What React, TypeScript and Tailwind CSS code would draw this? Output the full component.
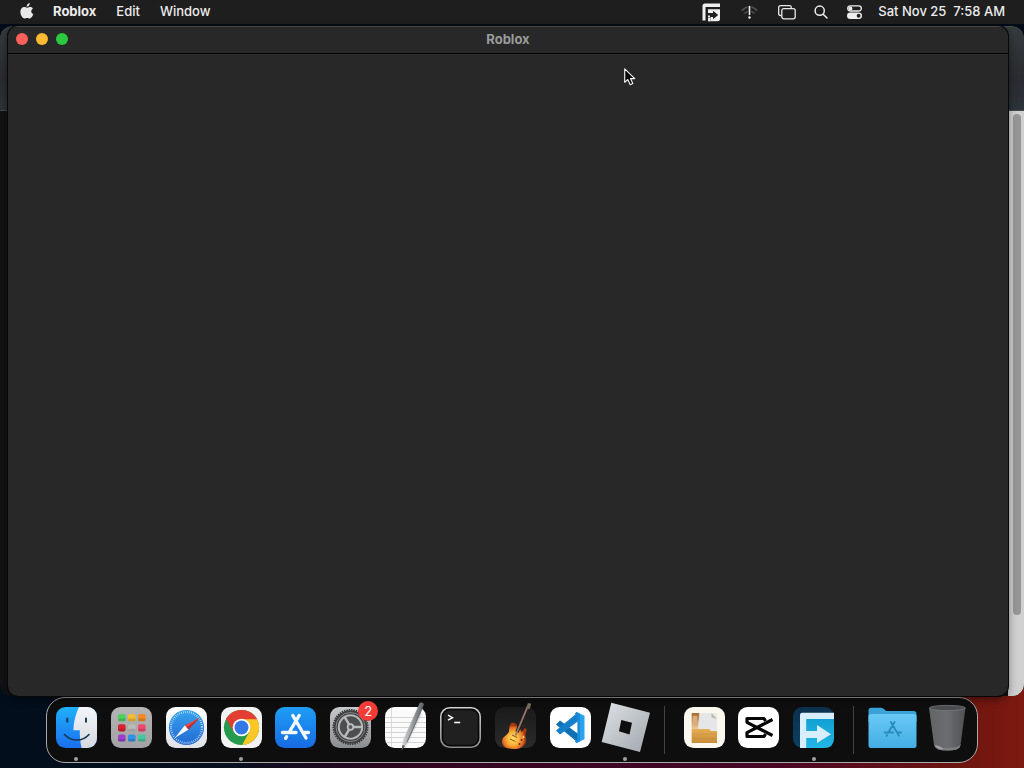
import type { ReactNode } from "react";

function Art({ children }: { children: ReactNode }) {
  return (
    <svg viewBox="0 0 41 41" className="h-[41px] w-[41px] overflow-visible" aria-hidden="true">
      {children}
    </svg>
  );
}

function Grad({ id, from, to, diagonal }: { id: string; from: string; to: string; diagonal?: boolean }) {
  return (
    <linearGradient id={id} x1="0" y1="0" x2={diagonal ? "1" : "0"} y2="1">
      <stop offset="0" stopColor={from} />
      <stop offset="1" stopColor={to} />
    </linearGradient>
  );
}

function Finder() {
  return (
    <Art>
      <defs>
        <Grad id="finderBlue" from="#1fb0f8" to="#1a6ff0" />
        <Grad id="finderWhite" from="#f4f5f8" to="#d5d9e0" />
        <clipPath id="finderClip"><rect width="41" height="41" rx="9.5" /></clipPath>
      </defs>
      <g clipPath="url(#finderClip)">
        <rect width="41" height="41" fill="url(#finderBlue)" />
        <path d="M23 0C19.500 7 17.600 15 17.300 23.300H23.800C23.600 29 24.100 35 25.600 41H41V0Z" fill="url(#finderWhite)" />
      </g>
      <path d="M11.300 11.500v3.200M30 11.500v3.200" stroke="#1b3a58" strokeWidth="2" strokeLinecap="round" />
      <path d="M8.500 27.500C15 34.800 26.500 34.800 33 27.500" stroke="#173653" strokeWidth="1.600" fill="none" strokeLinecap="round" />
    </Art>
  );
}

const launchColors = ["#4bd15c", "#f5bd2f", "#f58a1f", "#d8232f", "#b9bcb8", "#f0486f", "#9a3fd0", "#2f93e6", "#45c8a0"];

function Launchpad() {
  return (
    <Art>
      <defs><Grad id="launch" from="#b4b4b4" to="#a2a2a4" /></defs>
      <rect width="41" height="41" rx="9.500" fill="url(#launch)" />
      {launchColors.map((c, i) => (
        <g key={c}>
          <rect x={7 + (i % 3) * 10} y={7 + Math.floor(i / 3) * 10.200} width="7.600" height="7.200" rx="1.800" fill={c} />
          <rect x={7 + (i % 3) * 10} y={11.500 + Math.floor(i / 3) * 10.200} width="7.600" height="2.700" rx="1.300" fill="#000" opacity=".14" />
        </g>
      ))}
    </Art>
  );
}

function Safari() {
  return (
    <Art>
      <defs>
        <Grad id="safariBg" from="#ffffff" to="#dfe1e6" />
        <Grad id="safariBlue" from="#35a4ee" to="#2569d2" />
      </defs>
      <rect width="41" height="41" rx="9.500" fill="url(#safariBg)" />
      <circle cx="20.500" cy="20.500" r="17.600" fill="url(#safariBlue)" />
      <circle cx="20.500" cy="20.500" r="15.500" fill="none" stroke="#d6ebfc" strokeWidth="2.200" strokeDasharray=".65 1.380" />
      <path d="M33.800 10.500 18.700 18.600 22.600 22.600Z" fill="#f0443c" />
      <path d="M8.800 31 18.700 18.600 22.600 22.600Z" fill="#f6f8fb" />
      <path d="M33.800 10.500 20.600 20.600 22.600 22.600Z" fill="#b52d35" />
    </Art>
  );
}

function Chrome() {
  return (
    <Art>
      <defs><clipPath id="chromeClip"><circle cx="20.500" cy="20.500" r="17.600" /></clipPath></defs>
      <rect width="41" height="41" rx="9.500" fill="#f3f3f3" />
      <g clipPath="url(#chromeClip)">
        <rect x="2" y="2" width="37" height="37" fill="#269b4e" />
        <path d="M20.500 12H41V41H19.500L28.200 25Z" fill="#fbc726" />
        <path d="M0 0H41V12.200H20.500L12.700 24.900 3.500 9Z" fill="#e43d32" />
      </g>
      <circle cx="20.500" cy="20.500" r="8.800" fill="#fff" />
      <circle cx="20.500" cy="20.500" r="7" fill="#3478e6" />
    </Art>
  );
}

function Store() {
  return (
    <Art>
      <defs><Grad id="store" from="#1e9df5" to="#176be2" /></defs>
      <rect width="41" height="41" rx="9.500" fill="url(#store)" />
      <g stroke="#f1f8ff" strokeWidth="3.400" strokeLinecap="round" fill="none">
        <path d="M24.200 8.500 14 25.500M17.800 8.500 31 31M7.500 25.500H21M29 25.500H33.500M11.500 29.800 10.600 31.300" />
      </g>
    </Art>
  );
}

function Gear() {
  return (
    <Art>
      <defs><Grad id="gear" from="#c8c9cb" to="#8b8c8f" /></defs>
      <rect width="41" height="41" rx="9.500" fill="url(#gear)" />
      <circle cx="20.500" cy="20" r="16.800" fill="#3f4042" />
      <circle cx="20.500" cy="20" r="17.300" fill="none" stroke="#343537" strokeWidth="1.500" strokeDasharray="1.400 1" />
      <circle cx="20.500" cy="20" r="14.500" fill="none" stroke="#85878a" strokeWidth="1" />
      <circle cx="20.500" cy="20" r="11.700" fill="#4c4e50" stroke="#b5b7b9" strokeWidth="2" />
      <path d="M22.500 20H32M19.500 18.200 14.600 9.800M19.500 21.800 14.600 30.200" stroke="#b9bbbd" strokeWidth="2.400" />
      <circle cx="20.500" cy="20" r="2.800" fill="#56585a" stroke="#bbbdc0" strokeWidth="1.800" />
    </Art>
  );
}

function TextEdit() {
  return (
    <Art>
      <defs>
        <linearGradient id="pen" x1="0" y1="0" x2="1" y2=".3">
          <stop offset=".2" stopColor="#e1e3e4" /><stop offset=".55" stopColor="#a0a4a7" /><stop offset=".85" stopColor="#64696c" />
        </linearGradient>
      </defs>
      <rect width="41" height="41" rx="9.500" fill="#fbfbfb" />
      <path d="M0 10.500H41M0 15.500H41M0 20.500H41M0 25.500H41M0 30.500H41M1.500 35.500H39.500" stroke="#c9cacb" strokeWidth=".8" />
      <path d="M6.500 1V40" stroke="#cdced0" strokeWidth=".7" />
      <path d="M19 41 36 6" stroke="#000" strokeWidth="3" opacity=".1" />
      <path d="M34.500-3.500C35.500-5.500 39.500-4.300 38.800-2.200L23 34.500 16.700 43 18 33Z" fill="url(#pen)" />
      <path d="M17.500 38 20 39 16.700 43Z" fill="#4b4e50" />
      <path d="M37.500 1 22 35" stroke="#64686b" strokeWidth=".8" />
    </Art>
  );
}

function Terminal() {
  return (
    <Art>
      <defs><Grad id="termEdge" from="#d2d2d2" to="#8a8a8a" /></defs>
      <rect x=".8" y=".8" width="39.400" height="39.400" rx="9" fill="#080808" stroke="url(#termEdge)" strokeWidth="1.600" />
      <rect x="3.300" y="3.300" width="34.400" height="34.400" rx="6.500" fill="#202021" />
      <path d="M8 8.200 12.500 10.700 8 13.200M14.200 15.500H20.200" fill="none" stroke="#fff" strokeWidth="1.400" />
    </Art>
  );
}

function Guitar() {
  return (
    <Art>
      <defs>
        <Grad id="garage" from="#1a1a1a" to="#2b2b2c" />
        <radialGradient id="burst" cx=".45" cy=".6">
          <stop offset="0" stopColor="#ffe36a" /><stop offset=".5" stopColor="#f9ae37" /><stop offset=".85" stopColor="#e06c24" /><stop offset="1" stopColor="#a53a12" />
        </radialGradient>
      </defs>
      <rect width="41" height="41" rx="9.500" fill="url(#garage)" />
      <path d="M16.500 16C19.500 15 22 17 22.500 20 23.500 22.500 26 23 28 21.500 30.500 20 32.300 22 31.200 24.500 29.500 28 31.500 31 31 34.500 30 39.500 24.500 42.500 18.500 42 11.500 42 7 39.500 7 34.500 7 29.500 13 28 14 24.500 14.500 21.500 14 18 16.500 16Z" fill="url(#burst)" />
      <path d="M25.500 20 28.500 16.500 30.500 19 29 22.500 26 25Z" fill="#33231e" />
      <path d="M22 25 32.800 0" stroke="#2b1b16" strokeWidth="3.400" />
      <path d="M20.500 28.500 32.500 0" stroke="#8f7c72" strokeWidth="1.800" />
      <path d="M31 1 33-4 36.300-3.300 34.500 2.300Z" fill="#77685f" />
      <path d="M17 28 22 30.500M15 32 20.500 34.500" stroke="#8c4a20" strokeWidth="1" />
      <circle cx="26.500" cy="33" r=".9" fill="#5c2412" /><circle cx="24.500" cy="37" r=".9" fill="#5c2412" /><circle cx="28.500" cy="30" r=".9" fill="#ffe3a0" />
    </Art>
  );
}

function Code() {
  return (
    <Art>
      <rect width="41" height="41" rx="9.500" fill="#fff" />
      <path d="M6 17.500 10 13.500 28 26.800V35.800Z" fill="#1070b5" />
      <path d="M6 23.500 10 27.500 28 14.200V5.200Z" fill="#147fca" />
      <path d="M26.500 5 34.500 8.800V32.200L26.500 36 25 34.500 27.600 33V8L25 6.500Z" fill="#2ba2ef" />
      <path d="M26.500 5 25 6.500 27.600 9V32L25 34.500 26.500 36 30 34.300V6.700Z" fill="#198bd8" />
    </Art>
  );
}

function Blocks() {
  return (
    <Art>
      <defs><Grad id="blocks" from="#dfe3e7" to="#a0a6ac" diagonal /></defs>
      <path d="M6.300-4.300 45 5.700 35 45-3.300 35ZM16.300 13 14 24.200 24.500 27.500 27 15.700Z" fill="url(#blocks)" fillRule="evenodd" />
    </Art>
  );
}

function Archive() {
  return (
    <Art>
      <defs><Grad id="carton" from="#e5ad56" to="#c98c38" /><Grad id="flap" from="#a76d35" to="#f0ca91" /></defs>
      <rect width="41" height="41" rx="9.500" fill="#faf7ef" />
      <path d="M7.700 6H33V36H7.700Z" fill="#e1e1df" />
      <path d="M7.700 6H15.500L14 22H7.700Z" fill="url(#flap)" />
      <path d="M9 9H13V17H9Z" fill="#d9ae7c" />
      <path d="M15.500 6H27L33 12V24H14Z" fill="#e5e6e7" />
      <path d="M27.500 6V10.500L33 12Z" fill="#b8bab8" /><path d="M28 6H33V11Z" fill="#e8eddf" />
      <path d="M7.700 22H25L27 24H33V36H7.700Z" fill="url(#carton)" />
      <path d="M8 31.500H33M8 27H33" stroke="#b97e33" strokeWidth=".5" opacity=".5" />
    </Art>
  );
}

function Cut() {
  return (
    <Art>
      <rect width="41" height="41" rx="9.500" fill="#fff" />
      <path d="M34.500 12.500 9 25.700V29.500H26L27.500 27M34.500 28.500 9 15.300V11.500H26L27.500 14" fill="none" stroke="#050505" strokeWidth="3.200" strokeLinejoin="round" />
    </Art>
  );
}

function Arrow() {
  return (
    <Art>
      <defs><Grad id="arrowBack" from="#0b304d" to="#0c3f60" /><Grad id="arrowBlue" from="#12a0d3" to="#22b5e5" /></defs>
      <rect width="41" height="41" rx="9.500" fill="url(#arrowBack)" />
      <path d="M13 11H41V31Q41 41 31 41H13Z" fill="url(#arrowBlue)" />
      <path d="M7 41V8Q7 5.800 9.300 5.800H41V12H13.200V24H24V18L38 27.200 24 36V31H13.200V41Z" fill="#d6eefd" />
    </Art>
  );
}

function Folder() {
  return (
    <Art>
      <defs><Grad id="folder" from="#69c9f5" to="#43ade4" /></defs>
      <path d="M-3.500 3.500Q-3.500.800-.8.800H9Q11 .800 12.500 2.500L14.200 4H41.500Q44.500 4 44.500 7V15H-3.500Z" fill="#3ba2d8" />
      <rect x="-3.500" y="7" width="48" height="34" rx="2.800" fill="url(#folder)" />
      <g stroke="#288cbe" strokeWidth="1.900" strokeLinecap="round">
        <path d="M22.500 15 16.300 25.500M18.800 15 26.800 28.500M12.700 25.500H21M26 25.500H29M15 28 14.600 28.800" />
      </g>
    </Art>
  );
}

function Trash() {
  return (
    <Art>
      <defs>
        <linearGradient id="bin"><stop offset="0" stopColor="#616366" /><stop offset=".5" stopColor="#6c6d70" /><stop offset="1" stopColor="#505153" /></linearGradient>
      </defs>
      <path d="M2 1 7 38Q8 43.500 20.500 43.500T33.500 38L38.500 1Z" fill="url(#bin)" />
      <path d="M7.200 37Q9 41 20.500 41T33.700 37L33 40Q31 43.500 20.500 43.500T8 40Z" fill="#7b7d80" />
      <path d="M8 38Q9.500 42 17 42.500L13 39.500Z" fill="#a3a5a7" />
      <ellipse cx="20.300" cy="1" rx="18" ry="2.600" fill="#4a4c4f" stroke="#77797c" strokeWidth=".8" />
    </Art>
  );
}

type Item = { name: string; art: ReactNode; running?: boolean; badge?: number };

const apps: Item[] = [
  { name: "Finder", art: <Finder />, running: true },
  { name: "Launchpad", art: <Launchpad /> },
  { name: "Safari", art: <Safari /> },
  { name: "Google Chrome", art: <Chrome />, running: true },
  { name: "App Store", art: <Store /> },
  { name: "System Preferences", art: <Gear />, badge: 2 },
  { name: "TextEdit", art: <TextEdit /> },
  { name: "Terminal", art: <Terminal /> },
  { name: "GarageBand", art: <Guitar /> },
  { name: "Visual Studio Code", art: <Code /> },
  { name: "Roblox", art: <Blocks />, running: true },
];
const recent: Item[] = [
  { name: "Archive", art: <Archive /> },
  { name: "CapCut", art: <Cut /> },
  { name: "Remote Session", art: <Arrow />, running: true },
];
const places: Item[] = [
  { name: "Applications", art: <Folder /> },
  { name: "Trash", art: <Trash /> },
];

function DockItem({ name, art, running, badge }: Item) {
  return (
    <button type="button" aria-label={name} className="flex h-full min-w-0 flex-1 flex-col items-center pt-[9px]">
      <span className="relative block">
        {art}
        {badge !== undefined && (
          <span className="absolute -top-[6px] left-[28px] flex h-5 w-5 items-center justify-center rounded-full bg-[#f13c37] text-[13px] leading-4 text-white">
            {badge}
          </span>
        )}
      </span>
      {running && <span className="mt-[9px] h-1 w-1 rounded-full bg-[#a0a0a0]" />}
    </button>
  );
}

function Divider() {
  return (
    <span className="flex h-full w-6 shrink-0 justify-center py-2">
      <span className="w-px bg-[#434343]" />
    </span>
  );
}

function MenuBar() {
  return (
    <header className="flex h-6 shrink-0 items-center bg-[#1e1e1e] pr-[19px] pl-5 text-[13px] leading-4 font-medium text-[#ececec]">
      <nav className="flex items-center gap-5 pb-[2px]">
        <button type="button" aria-label="System menu" className="-mr-[1px]">
          <svg viewBox="0 0 14 16" className="h-4 w-[14px]" fill="#e8e8e8" aria-hidden="true">
            <path d="M9.800 0C9.900 2 8.400 3.800 6.600 3.800 6.500 2 8 .300 9.800 0ZM12.900 5.400C10.500 6.900 10.800 10.100 13.400 11.100 12.500 13.500 11.200 15.500 9.800 15.500 8.700 15.500 8.300 14.900 7.100 14.900S5.500 15.500 4.500 15.500C2.500 15.500.4 12 .4 8.800.4 5.800 2.200 4.100 4.200 4.100 5.300 4.100 6.300 4.800 7 4.800S8.700 4 10 4C11.200 4 12.200 4.500 12.900 5.400Z" />
          </svg>
        </button>
        <button type="button" className="font-bold">Roblox</button>
        <button type="button">Edit</button>
        <button type="button">Window</button>
      </nav>
      <div className="ml-auto flex items-center">
        <button type="button" aria-label="Remote session" className="mr-5">
          <svg viewBox="0 0 19 19" className="h-[19px] w-[19px]" aria-hidden="true">
            <path d="M18 .5H3Q.5.500.5 3V17.500H3.500V4H18Z" fill="#efefef" />
            <path d="M6 6.300H18V15.800Q18 18.300 15.500 18.300H6Z" fill="#efefef" />
            <path d="M6 10H11V7.800L16.200 12 11 16.200V14H8.500V18.300H6V14.500H8V12.500H6Z" fill="#1e1e1e" />
            <path d="M6 15H8.500V18.300H6Z" fill="#efefef" />
          </svg>
        </button>
        <button type="button" aria-label="Wi-Fi" className="mr-5">
          <svg viewBox="0 0 17 15" className="h-[15px] w-[17px]" fill="none" aria-hidden="true">
            <path d="M.8 5.700Q8.500-1.800 16.200 5.700M3.500 8.500Q8.500 3.800 13.500 8.500" stroke="#505050" strokeWidth="1.700" />
            <path d="M8.500 0V14" stroke="#1e1e1e" strokeWidth="3.600" />
            <path d="M8.500 1.500V9.500" stroke="#f0f0f0" strokeWidth="1.600" strokeLinecap="round" />
            <circle cx="8.500" cy="12.500" r="1.200" fill="#f0f0f0" />
          </svg>
        </button>
        <button type="button" aria-label="Screen mirroring" className="mr-[18px]">
          <svg viewBox="0 0 18 15" className="h-[15px] w-[18px]" fill="none" stroke="#e9e9e9" strokeWidth="1.300" aria-hidden="true">
            <path d="M3.300 10.500H2.500Q.700 10.500.700 8.700V2.500Q.700.700 2.500.700H11.500Q13.300.700 13.300 2.500V3" />
            <rect x="3.800" y="3.700" width="13.400" height="10.100" rx="2" />
          </svg>
        </button>
        <button type="button" aria-label="Search" className="mr-[19px]">
          <svg viewBox="0 0 14 14" className="h-[14px] w-[14px]" fill="none" stroke="#ededed" strokeWidth="1.500" strokeLinecap="round" aria-hidden="true">
            <circle cx="5.700" cy="5.700" r="4.600" /><path d="M9.200 9.200 13 13" />
          </svg>
        </button>
        <button type="button" aria-label="Control center" className="mr-4">
          <svg viewBox="0 0 15 14" className="h-[14px] w-[15px]" aria-hidden="true">
            <rect x=".7" y=".8" width="13.600" height="5.200" rx="2.600" fill="none" stroke="#ededed" strokeWidth="1.300" />
            <circle cx="3.400" cy="3.400" r="2" fill="#ededed" />
            <rect y="7.500" width="15" height="6.500" rx="3.250" fill="#ededed" /><circle cx="11.600" cy="10.750" r="1.900" fill="#1e1e1e" />
          </svg>
        </button>
        <time className="pb-[2px] whitespace-pre">Sat Nov 25  7:58 AM</time>
      </div>
    </header>
  );
}

export default function App() {
  return (
    <div className="flex h-screen flex-col overflow-hidden bg-[linear-gradient(90deg,#020e1c_0%,#06101e_22%,#30051f_40%,#480625_75%,#6e150f_94%,#7d1a10_100%)] font-['Inter','Liberation_Sans',sans-serif]">
      <MenuBar />
      <main className="relative flex min-h-0 flex-1 bg-[linear-gradient(#020b18_0px,#020b18_40px,transparent_60px)] pt-[2px] pr-4 pb-px pl-2">
        <section aria-label="Browser" className="absolute inset-x-0 top-[2px] bottom-px flex flex-col overflow-hidden rounded-xl bg-[#101214]">
          <div className="h-[85px] shrink-0 rounded-t-xl border-t border-b border-[#454a4c] bg-[linear-gradient(#343c3d,#292b31_60%,#2d3338)]" />
          <div className="flex min-h-0 flex-1 justify-end">
            <div className="w-4 bg-[#d0d0d0] pt-[3px] pl-[5px]">
              <div className="h-[86%] w-2 rounded-full bg-[#969696]" />
            </div>
          </div>
        </section>
        <section aria-label="Roblox" className="relative flex flex-1 flex-col overflow-hidden rounded-[10px] bg-[#282828] shadow-[0_0_0_1px_#080808,0_3px_8px_rgba(0,0,0,0.5)]">
          <div className="grid h-7 shrink-0 grid-cols-[1fr_auto_1fr] items-center border-t border-b border-t-[#444] border-b-black px-2 pb-[2px]">
            <div className="flex gap-2">
              <button type="button" aria-label="Close" className="h-3 w-3 rounded-full bg-[#fc605b]" />
              <button type="button" aria-label="Minimize" className="h-3 w-3 rounded-full bg-[#fcbb31]" />
              <button type="button" aria-label="Zoom" className="h-3 w-3 rounded-full bg-[#2bc840]" />
            </div>
            <h1 className="text-[13px] leading-4 font-bold text-[#9b9b9b]">Roblox</h1>
          </div>
          <div className="flex-1 border-t border-[#303030]" />
        </section>
        <svg viewBox="0 0 12 18" className="absolute top-[44px] left-[61%] -ml-px h-[18px] w-3" aria-hidden="true">
          <path d="M.7.800V14.300L3.800 11.500 6.200 16.800 8.800 15.600 6.500 10.600H10.800Z" fill="#080808" stroke="#f5f5f5" strokeWidth="1.100" strokeLinejoin="round" />
        </svg>
      </main>
      <footer className="flex shrink-0 justify-center pb-[5px]">
        <nav aria-label="Dock" className="flex h-[66px] w-[932px] max-w-full items-center rounded-[19px] border border-[#a9a9a9] bg-[#0e0e0e] px-[2px]">
          {apps.map((item) => <DockItem key={item.name} {...item} />)}
          <Divider />
          {recent.map((item) => <DockItem key={item.name} {...item} />)}
          <Divider />
          {places.map((item) => <DockItem key={item.name} {...item} />)}
        </nav>
      </footer>
    </div>
  );
}
